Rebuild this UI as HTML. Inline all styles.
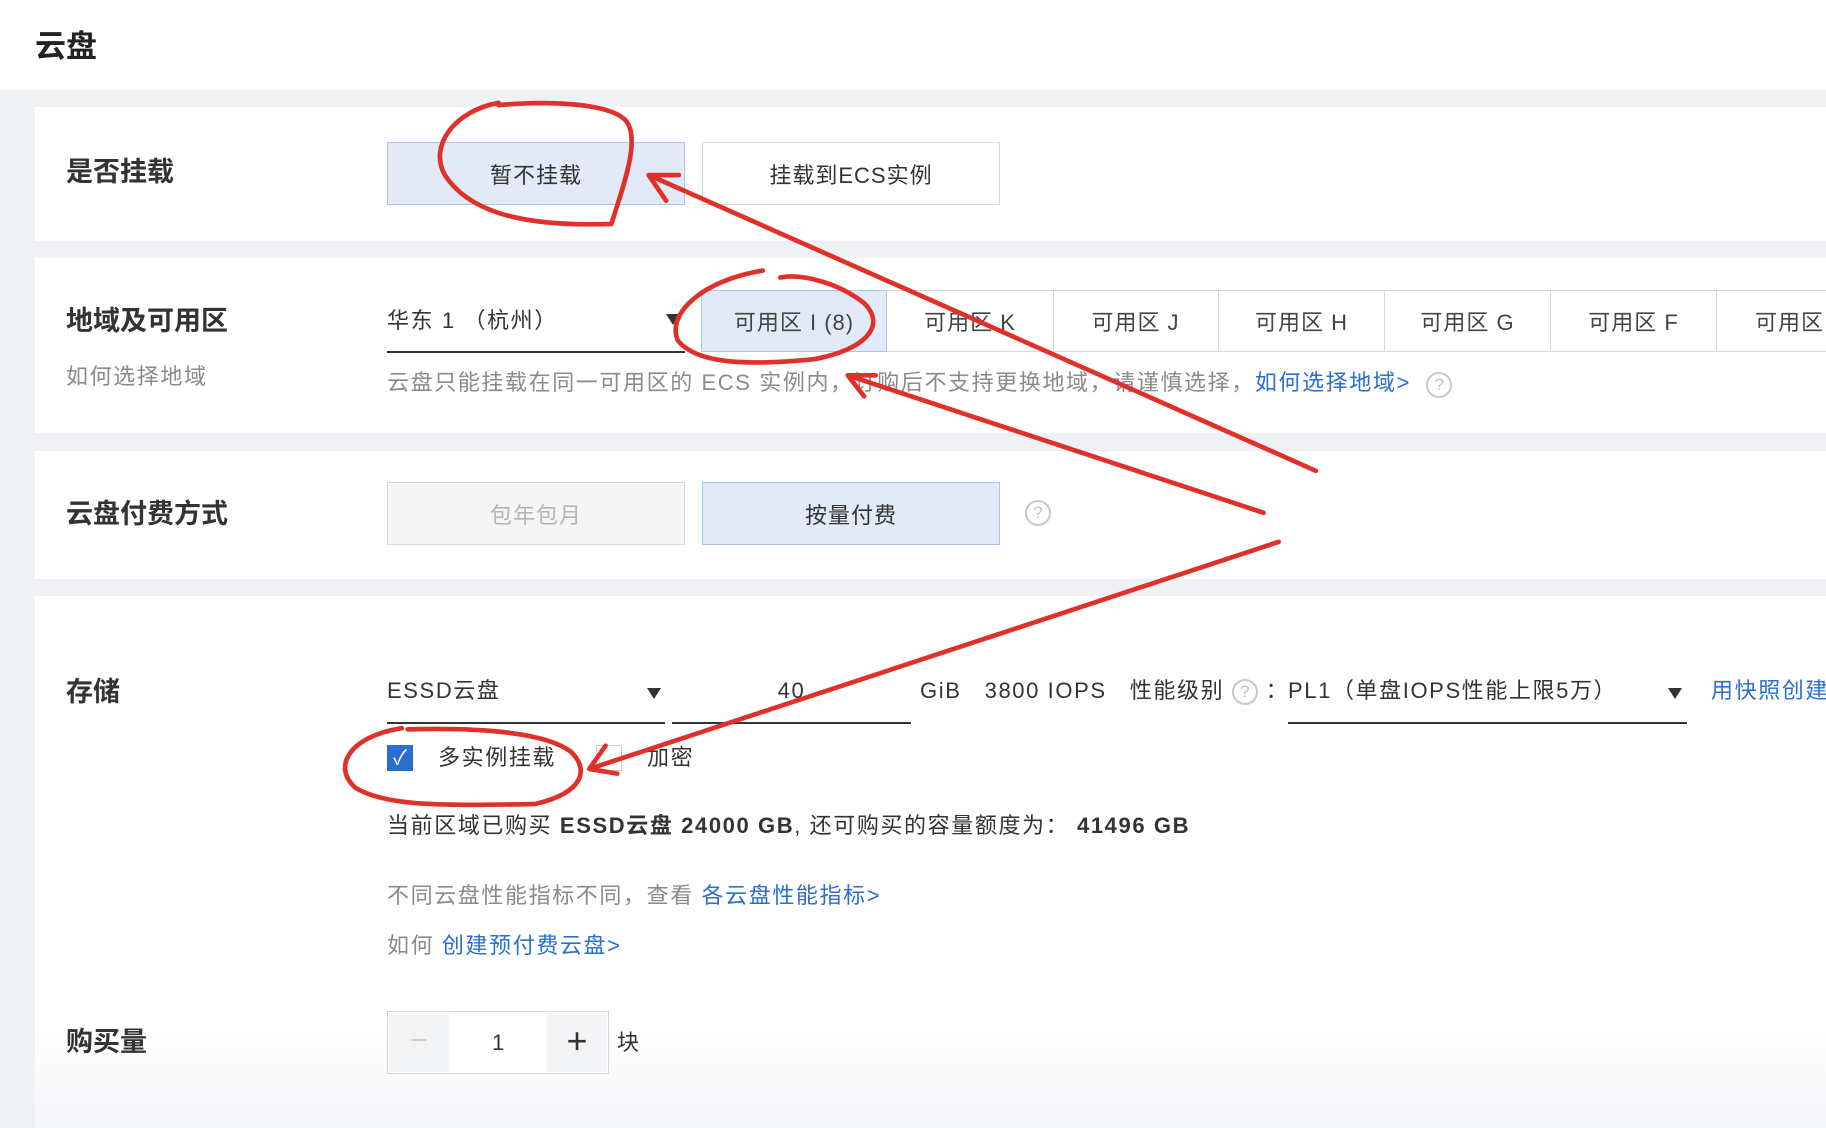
<!DOCTYPE html>
<html><head><meta charset="utf-8"><style>
*{box-sizing:border-box;margin:0;padding:0}
body{width:1826px;height:1128px;overflow:hidden;background:#eff1f4;font-family:"Liberation Sans","Noto Sans CJK SC",sans-serif;color:#333;position:relative}
.a{position:absolute;white-space:nowrap}
.hdr{left:0;top:0;width:1826px;height:90px;background:#fff}
.panel{background:#fff;left:35px;width:1791px}
.lbl{font-size:27px;font-weight:bold;color:#333;line-height:30px}
.btn{height:63px;border:1.5px solid #d5d5d5;background:#fff;font-size:22px;display:flex;align-items:center;justify-content:center;color:#333;letter-spacing:1px}
.sel{background:#e1eaf6;border-color:#a9c5ea}
.tab{top:290px;height:62px;border:1.5px solid #d8d8d8;border-left:none;font-size:22px;display:flex;align-items:center;justify-content:center;color:#444;letter-spacing:1px}
.t{font-size:22px;line-height:28px;letter-spacing:1.6px}
.g{color:#8a8a8a}
.b{color:#2a6fcf}
.q{display:inline-block;width:26px;height:26px;border:2px solid #c8c8c8;border-radius:50%;color:#c0c0c0;font-size:17px;text-align:center;line-height:22px;letter-spacing:0}
.ul{border-bottom:2px solid #333}
.tri{width:0;height:0;border-left:7px solid transparent;border-right:7px solid transparent;border-top:11px solid #333}
</style></head><body>
<div class="a hdr"></div>
<div class="a" style="left:35px;top:21px;font-size:31px;font-weight:bold;color:#222">云盘</div>

<div class="a panel" style="top:107px;height:134px"></div>
<div class="a lbl" style="left:66px;top:157px">是否挂载</div>
<div class="a btn sel" style="left:387px;top:142px;width:298px">暂不挂载</div>
<div class="a btn" style="left:702px;top:142px;width:298px">挂载到ECS实例</div>

<div class="a panel" style="top:258px;height:175px"></div>
<div class="a lbl" style="left:66px;top:306px">地域及可用区</div>
<div class="a t g" style="left:66px;top:363px">如何选择地域</div>
<div class="a ul t" style="left:387px;top:307px;width:298px;height:46px">华东 1 （杭州）</div>
<div class="a tri" style="left:666px;top:314px"></div>
<div class="a tab sel" style="left:701px;width:186px;border-left:1.5px solid #a9c5ea;border-color:#a9c5ea">可用区 I (8)</div>
<div class="a tab" style="left:887px;width:167px">可用区 K</div>
<div class="a tab" style="left:1053px;width:166px">可用区 J</div>
<div class="a tab" style="left:1219px;width:166px">可用区 H</div>
<div class="a tab" style="left:1385px;width:166px">可用区 G</div>
<div class="a tab" style="left:1551px;width:166px">可用区 F</div>
<div class="a tab" style="left:1717px;width:140px;justify-content:flex-start;padding-left:38px">可用区</div>
<div class="a t g" style="left:387px;top:369px">云盘只能挂载在同一可用区的 ECS 实例内，订购后不支持更换地域，请谨慎选择，<span class="b">如何选择地域&gt;</span> &nbsp;<span class="q">?</span></div>

<div class="a panel" style="top:451px;height:128px"></div>
<div class="a lbl" style="left:66px;top:499px">云盘付费方式</div>
<div class="a btn" style="left:387px;top:482px;width:298px;background:#f5f5f5;color:#b5b5b5">包年包月</div>
<div class="a btn sel" style="left:702px;top:482px;width:298px">按量付费</div>
<div class="a q" style="left:1025px;top:500px">?</div>

<div class="a panel" style="top:596px;height:532px;background:linear-gradient(#fff 0,#fff 430px,#f4f5f7 532px)"></div>
<div class="a lbl" style="left:66px;top:677px">存储</div>
<div class="a ul t" style="left:387px;top:677px;width:278px;height:47px">ESSD云盘</div>
<div class="a tri" style="left:647px;top:688px"></div>
<div class="a ul t" style="left:672px;top:677px;width:239px;height:47px;text-align:center">40</div>
<div class="a t" style="left:920px;top:677px">GiB &nbsp;&nbsp;3800 IOPS &nbsp;&nbsp;性能级别 <span class="q" style="vertical-align:middle">?</span> ：</div>
<div class="a ul t" style="left:1288px;top:677px;width:399px;height:47px">PL1（单盘IOPS性能上限5万）</div>
<div class="a tri" style="left:1668px;top:688px"></div>
<div class="a t b" style="left:1711px;top:677px">用快照创建</div>

<div class="a" style="left:387px;top:745px;width:26px;height:26px;background:#2a6fcf;color:#fff;font-size:20px;text-align:center;line-height:26px">✓</div>
<div class="a t" style="left:438px;top:744px">多实例挂载</div>
<div class="a" style="left:596px;top:745px;width:26px;height:26px;border:1.5px solid #ccc"></div>
<div class="a t" style="left:647px;top:744px">加密</div>
<div class="a t" style="left:387px;top:812px">当前区域已购买 <b>ESSD云盘 24000 GB</b>, 还可购买的容量额度为： <b>41496 GB</b></div>
<div class="a t g" style="left:387px;top:882px">不同云盘性能指标不同，查看 <span class="b">各云盘性能指标&gt;</span></div>
<div class="a t g" style="left:387px;top:932px">如何 <span class="b">创建预付费云盘&gt;</span></div>

<div class="a lbl" style="left:66px;top:1027px">购买量</div>
<div class="a" style="left:387px;top:1011px;width:222px;height:63px;border:1.5px solid #d5d5d5;background:#fff"></div>
<div class="a" style="left:389px;top:1013px;width:60px;height:59px;background:#f3f4f6;color:#ccc;font-size:30px;text-align:center;line-height:56px">−</div>
<div class="a" style="left:547px;top:1013px;width:60px;height:59px;background:#f3f4f6;color:#333;font-size:36px;text-align:center;line-height:56px">+</div>
<div class="a t" style="left:492px;top:1029px">1</div>
<div class="a t" style="left:617px;top:1029px">块</div>

<svg class="a" style="left:0;top:0" width="1826" height="1128" viewBox="0 0 1568 968" fill="none" stroke="#e1302a" stroke-width="4" stroke-linecap="round" stroke-linejoin="round">
<path d="M428,88 C390,95 368,125 382,150 C400,178 440,195 525,192 C535,160 550,120 538,104 C525,88 470,86 428,90"/>
<path d="M1130,404 L557,150 M557,150 L583,150 M557,150 L572,172"/>
<path d="M655,232 C605,240 572,268 582,292 C598,312 640,314 700,308 C742,300 762,280 742,260 C722,244 690,234 670,238"/>
<path d="M1085,440 L728,322 M728,322 L752,322 M728,322 L742,340"/>
<path d="M345,625 C300,632 285,658 305,676 C330,692 382,692 460,690 C502,680 506,660 490,645 C470,630 420,624 350,626"/>
<path d="M1098,465 L506,660 M506,660 L520,640 M506,660 L530,664"/>
</svg>
</body></html>
